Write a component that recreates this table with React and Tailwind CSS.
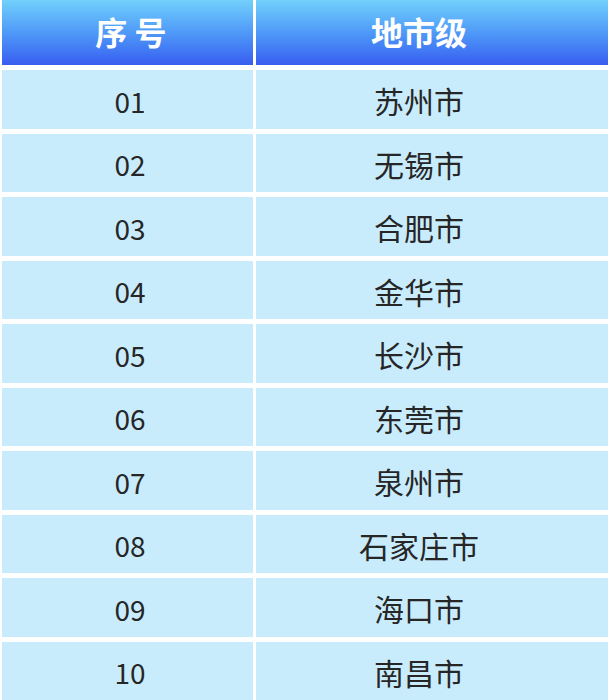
import React from "react";

const rows = [
  ["01", "苏州市"],
  ["02", "无锡市"],
  ["03", "合肥市"],
  ["04", "金华市"],
  ["05", "长沙市"],
  ["06", "东莞市"],
  ["07", "泉州市"],
  ["08", "石家庄市"],
  ["09", "海口市"],
  ["10", "南昌市"],
];

const font = { fontFamily: '"Noto Sans CJK SC", "Noto Sans", sans-serif' };

export default function App() {
  return (
    <div
      className="w-[609px] h-[700px] bg-white flex flex-col gap-[5px] pl-[2px] pr-[1px] overflow-hidden"
      style={font}
    >
      <div className="h-[65px] shrink-0 flex gap-[3px]">
        <div className="w-[251px] flex items-center justify-center pl-[7px] pb-[3px] bg-gradient-to-b from-[#72d0fb] to-[#3a5cf0] text-white text-[32px] font-bold">
          序 号
        </div>
        <div className="flex-1 flex items-center justify-center pr-[26px] pb-[3px] bg-gradient-to-b from-[#72d0fb] to-[#3a5cf0] text-white text-[32px] font-bold">
          地市级
        </div>
      </div>
      {rows.map(([n, c]) => (
        <div key={n} className="flex-1 flex gap-[3px]">
          <div className="w-[251px] flex items-center justify-center pl-[5px] pt-[3px] bg-[#c9ecfd] text-[#262626] text-[28px]">
            {n}
          </div>
          <div className="flex-1 flex items-center justify-center pr-[26px] pt-[3px] bg-[#c9ecfd] text-[#262626] text-[30px]">
            {c}
          </div>
        </div>
      ))}
    </div>
  );
}
